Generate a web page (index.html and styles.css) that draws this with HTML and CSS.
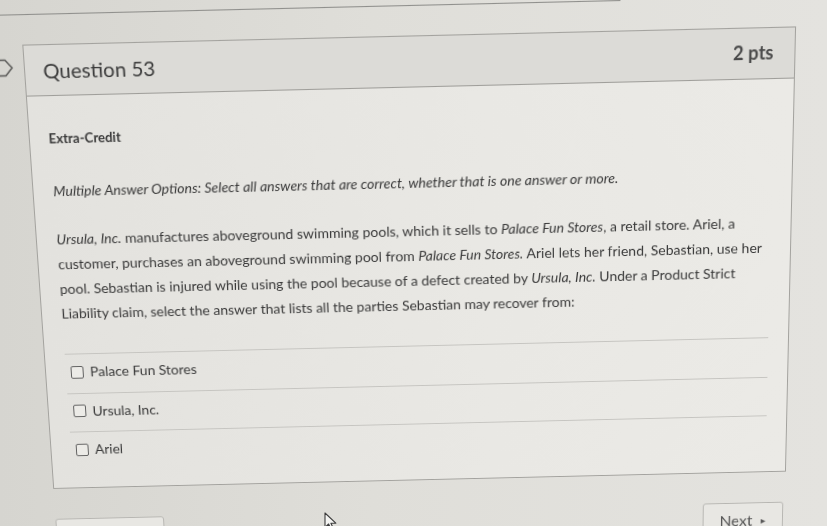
FILE: index.html
```html
<!DOCTYPE html>
<html lang="en">
<head>
    <meta charset="UTF-8">
    <meta name="viewport" content="width=device-width, initial-scale=1.0">
    <title>Question 53</title>
    <link rel="stylesheet" href="styles.css">
</head>
<body>

<div class="stage">
    <div class="prev-edge"></div>

    <div class="quiz">
        <div class="flag-col">
            <svg class="flag" width="26" height="18" viewBox="0 0 26 18">
                <polygon points="-6,1.5 18,1.5 24.5,9 18,16.5 -6,16.5" fill="none" stroke="#5a5a58" stroke-width="1.4" stroke-linejoin="round"/>
            </svg>
        </div>

        <div class="question">
            <div class="question-header">
                <span class="question-name">Question 53</span>
                <span class="question-pts">2 pts</span>
            </div>

            <div class="question-body">
                <p class="label">Extra-Credit</p>
                <p class="instructions">Multiple Answer Options: Select all answers that are correct, whether that is one answer or more.</p>
                <p class="stem">
                    <em>Ursula, Inc.</em> manufactures aboveground swimming pools, which it sells to <em>Palace Fun Stores</em>, a retail store. Ariel, a customer, purchases an aboveground swimming pool from <em>Palace Fun Stores.</em> Ariel lets her friend, Sebastian, use her pool. Sebastian is injured while using the pool because of a defect created by <em>Ursula, Inc.</em> Under a Product Strict Liability claim, select the answer that lists all the parties Sebastian may recover from:
                </p>

                <div class="answers">
                    <label class="answer"><span class="checkbox"></span>Palace Fun Stores</label>
                    <label class="answer"><span class="checkbox"></span>Ursula, Inc.</label>
                    <label class="answer"><span class="checkbox"></span>Ariel</label>
                </div>
            </div>
        </div>
    </div>

    <div class="nav">
        <div class="btn btn-prev"></div>
        <div class="btn btn-next">Next <span class="arrow">&#9656;</span></div>
    </div>
</div>

<svg class="cursor" width="14" height="19" viewBox="0 0 14 19">
    <path d="M1 1 L1 15.5 L4.6 12 L7.2 17.6 L9.4 16.6 L6.9 11.2 L11.8 11.2 Z" fill="#f4f4f2" stroke="#3c3c3c" stroke-width="1.1" stroke-linejoin="round"/>
</svg>

</body>
</html>
```

FILE: styles.css
```css
/* Page */
html, body {
    margin: 0;
    padding: 0;
}

body {
    width: 827px;
    height: 526px;
    overflow: hidden;
    position: relative;
    font-family: 'Lato', 'Open Sans', sans-serif;
    color: #3a3a3a;
    background: linear-gradient(90deg, #d6d5d0 0%, #dfded9 45%, #e4e3df 100%);
}

/* the photo is taken at a slight angle */
.stage {
    width: 827px;
    height: 526px;
    transform-origin: 413px 263px;
    transform: perspective(1000px) rotate(-1.35deg) rotateX(-7deg);
}

.prev-edge {
    width: 640px;
    height: 11px;
    margin-left: -20px;
    border-bottom: 1px solid #8f8f8c;
}

.quiz {
    display: flex;
    margin-top: 28px;
}

.flag-col {
    width: 37.5px;
    padding-top: 13px;
}

.flag {
    display: block;
    margin-left: 2px;
}

/* Question card */
.question {
    width: 751px;
    border: 1px solid #a3a29e;
    background: linear-gradient(90deg, #e3e2de 0%, #e9e8e4 60%, #ebeae6 100%);
}

.question-header {
    height: 48px;
    display: flex;
    align-items: center;
    justify-content: space-between;
    padding: 0 20px 0 18px;
    background: #dcdbd7;
    border-bottom: 1px solid #9f9e9a;
}

.question-name {
    font-size: 20px;
    color: #3b3b3b;
}

.question-pts {
    font-size: 18px;
    font-weight: 700;
    color: #4a4a4a;
    margin-top: -3px;
}

.question-body {
    padding: 31px 20px 18px;
    font-size: 14px;
}

.question-body p {
    margin: 0;
}

.label {
    font-size: 13px;
    font-weight: 700;
    line-height: 20px;
    margin-left: -1px !important;
}

.instructions {
    font-style: italic;
    line-height: 20px;
    margin-top: 32px !important;
}

.stem {
    line-height: 25px;
    margin-top: 25px !important;
}

.answers {
    margin-top: 29px;
}

.answer {
    display: flex;
    align-items: center;
    gap: 7px;
    padding: 8px 5px 11.5px;
    line-height: 20px;
    border-top: 1px solid #c6c5c1;
}

.checkbox {
    width: 11px;
    height: 11px;
    border: 1.2px solid #606060;
    border-radius: 2px;
    background: #ecebe7;
}

/* Footer buttons */
.nav {
    display: flex;
    justify-content: space-between;
    width: 751px;
    margin: 32px 0 0 37.5px;
}

.btn {
    height: 32px;
    box-sizing: border-box;
    border: 1px solid #b7b6b2;
    border-radius: 3px;
    background: #e8e7e3;
}

.btn-prev {
    width: 112px;
}

.btn-next {
    width: 83px;
    padding-top: 8px;
    text-align: center;
    font-size: 16px;
    line-height: 20px;
    color: #555;
}

.arrow {
    font-size: 10px;
    margin-left: 4px;
    vertical-align: 2px;
}

.cursor {
    position: absolute;
    left: 324px;
    top: 512px;
}
```
